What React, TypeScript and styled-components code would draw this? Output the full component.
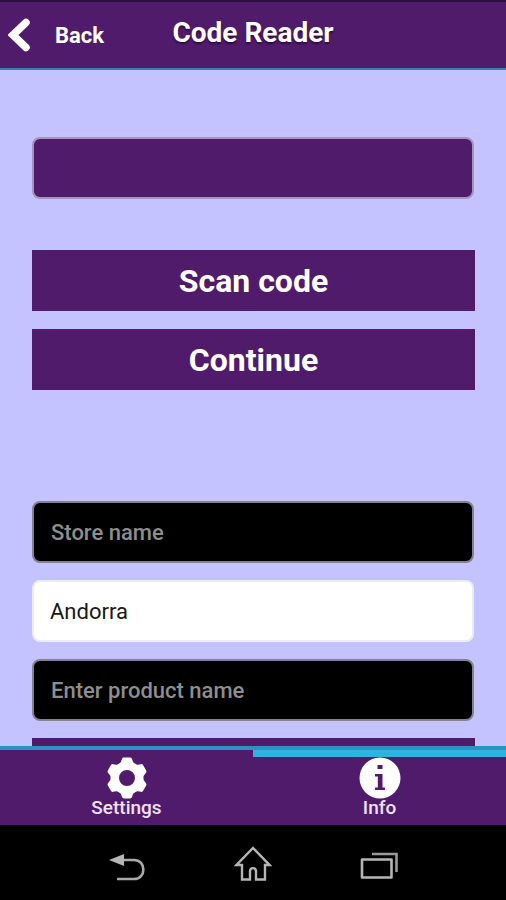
import React from "react";
import styled, { createGlobalStyle } from "styled-components";

const purple = "#511b6c";
const cyan = "#2fb3e3";

const GlobalStyle = createGlobalStyle`
  *, *::before, *::after { box-sizing: border-box; }
  body { margin: 0; background: #000; font-family: Roboto, "Liberation Sans", sans-serif; }
  button, input, select { font: inherit; margin: 0; }
`;

const Screen = styled.div`
  display: flex;
  flex-direction: column;
  height: 100vh;
  background: #c5c3ff;
`;

const Header = styled.header`
  flex: none;
  display: grid;
  grid-template-columns: 1fr auto 1fr;
  height: 70px;
  border-top: 2px solid #2d0c40;
  border-bottom: 2px solid #3f7fae;
  background: ${purple};
  color: #fff;
`;

const BackButton = styled.button`
  display: flex;
  align-items: center;
  justify-self: start;
  gap: 22px;
  padding: 0 8px;
  border: 0;
  background: none;
  color: inherit;
  font-size: 22px;
  font-weight: 700;
`;

const Title = styled.h1`
  margin: 0;
  font-size: 28px;
  line-height: 62px;
  font-weight: 700;
  text-shadow: 0 2px 2px #2d0c40;
`;

const Content = styled.main`
  flex: 1;
  min-height: 0;
  overflow: hidden;
  padding: 67px 31px 0 32px;
`;

const Group = styled.div`
  display: flex;
  flex-direction: column;
  gap: 18px;
  margin-bottom: 51px;
`;

const Actions = styled(Group)`
  margin-bottom: 111px;
`;

const Form = styled.form`
  display: flex;
  flex-direction: column;
  gap: 17px;
`;

const Field = styled.input<{ $tone: "purple" | "black" }>`
  width: calc(100% - 1px);
  height: 62px;
  flex: none;
  padding: 0 17px;
  border: 2px solid ${(p) => (p.$tone === "black" ? "#858190" : "#a593b8")};
  border-radius: 8px;
  outline: 0;
  background: ${(p) => (p.$tone === "black" ? "#000" : purple)};
  color: #fff;
  font-size: 22px;
  font-weight: 500;
  &::placeholder { color: #8e8e8e; opacity: 1; }
`;

const CountrySelect = styled.select`
  appearance: none;
  width: calc(100% - 1px);
  height: 62px;
  flex: none;
  padding: 0 16px;
  border: 2px solid #ecebf8;
  border-radius: 8px;
  background: #fff;
  color: #181818;
  font-size: 22px;
`;

const ActionButton = styled.button`
  width: 100%;
  height: 61px;
  flex: none;
  padding: 0;
  border: 0;
  background: ${purple};
  color: #fff;
  font-size: 32px;
  font-weight: 700;
`;

const TabBar = styled.nav`
  flex: none;
  display: grid;
  grid-template-columns: 1fr 1fr;
  height: 79px;
  border-top: 4px solid #2c92c4;
  background: ${purple};
`;

const Tab = styled.button<{ $active?: boolean }>`
  display: flex;
  flex-direction: column;
  align-items: center;
  padding: 0;
  border: 0;
  border-top: 7px solid ${(p) => (p.$active ? cyan : "transparent")};
  background: none;
  color: #f0e2f6;
  font-size: 19px;
  line-height: 18px;
  font-weight: 500;
`;

const SystemBar = styled.footer`
  flex: none;
  display: grid;
  grid-template-columns: repeat(3, 126px);
  justify-content: center;
  height: 75px;
  background: #000;
`;

const SystemButton = styled.button`
  display: flex;
  align-items: center;
  justify-content: center;
  padding: 4px 0 0;
  border: 0;
  background: none;
`;

const ChevronIcon = () => (
  <svg width="25" height="34" viewBox="0 0 25 34" aria-hidden="true">
    <path d="M18 4.500L5 17L18 29.500" fill="none" stroke="#fff" strokeWidth="7.500" strokeLinejoin="miter" strokeLinecap="round" />
  </svg>
);

const GearIcon = () => (
  <svg width="42" height="42" viewBox="-21 -21 42 42" aria-hidden="true">
    <circle r="12.200" fill="none" stroke="#fff" strokeWidth="8.400" />
    {[0, 60, 120, 180, 240, 300].map((angle) => (
      <path key={angle} transform={`rotate(${angle})`} d="M-9-13Q-6-15-5-19Q-4.600-20.400-3-20.400H3Q4.600-20.400 5-19Q6-15 9-13L5-11H-5Z" fill="#fff" />
    ))}
  </svg>
);

const InfoIcon = () => (
  <svg width="42" height="42" viewBox="0 0 42 42" aria-hidden="true">
    <circle cx="21" cy="21" r="20.500" fill="#fff" />
    <path d="M18.500 8H23.500V12H18.500ZM16 17H23.500V30.500H26V33H16V30.500H18.800V19.500H16Z" fill={purple} />
  </svg>
);

const ReturnIcon = () => (
  <svg width="38" height="34" viewBox="0 0 38 34" aria-hidden="true">
    <path d="M14 12H26C38.500 12 38.500 31 26 31H9" fill="none" stroke="#aaa" strokeWidth="2.600" />
    <path d="M1 12L16 6V18Z" fill="#b5b5b5" />
  </svg>
);

const HomeIcon = () => (
  <svg width="38" height="38" viewBox="0 0 38 38" aria-hidden="true">
    <path d="M19 2L35.500 19H31V33.500H22V25.500C22 21 16 21 16 25.500V33.500H8V19H2.500Z" fill="none" stroke="#b5b5b5" strokeWidth="2.400" />
  </svg>
);

const RecentIcon = () => (
  <svg width="40" height="30" viewBox="0 0 40 30" aria-hidden="true">
    <path d="M3 9.500H32.500V27.500H3Z" fill="none" stroke="#b5b5b5" strokeWidth="2.600" strokeLinejoin="round" />
    <path d="M13 4H37.500V22" fill="none" stroke="#999" strokeWidth="2.600" />
  </svg>
);

export default function App() {
  return (
    <>
      <GlobalStyle />
      <Screen>
        <Header>
          <BackButton type="button"><ChevronIcon />Back</BackButton>
          <Title>Code Reader</Title>
        </Header>
        <Content>
          <Group>
            <Field $tone="purple" aria-label="Code" />
          </Group>
          <Actions>
            <ActionButton type="button">Scan code</ActionButton>
            <ActionButton type="button">Continue</ActionButton>
          </Actions>
          <Form>
            <Field $tone="black" placeholder="Store name" aria-label="Store name" />
            <CountrySelect aria-label="Country" defaultValue="Andorra">
              <option>Andorra</option>
            </CountrySelect>
            <Field $tone="black" placeholder="Enter product name" aria-label="Product name" />
            <ActionButton type="submit" aria-label="Submit" />
          </Form>
        </Content>
        <TabBar>
          <Tab type="button"><GearIcon />Settings</Tab>
          <Tab type="button" $active><InfoIcon />Info</Tab>
        </TabBar>
        <SystemBar>
          <SystemButton type="button" aria-label="Return"><ReturnIcon /></SystemButton>
          <SystemButton type="button" aria-label="Home"><HomeIcon /></SystemButton>
          <SystemButton type="button" aria-label="Recent apps"><RecentIcon /></SystemButton>
        </SystemBar>
      </Screen>
    </>
  );
}
